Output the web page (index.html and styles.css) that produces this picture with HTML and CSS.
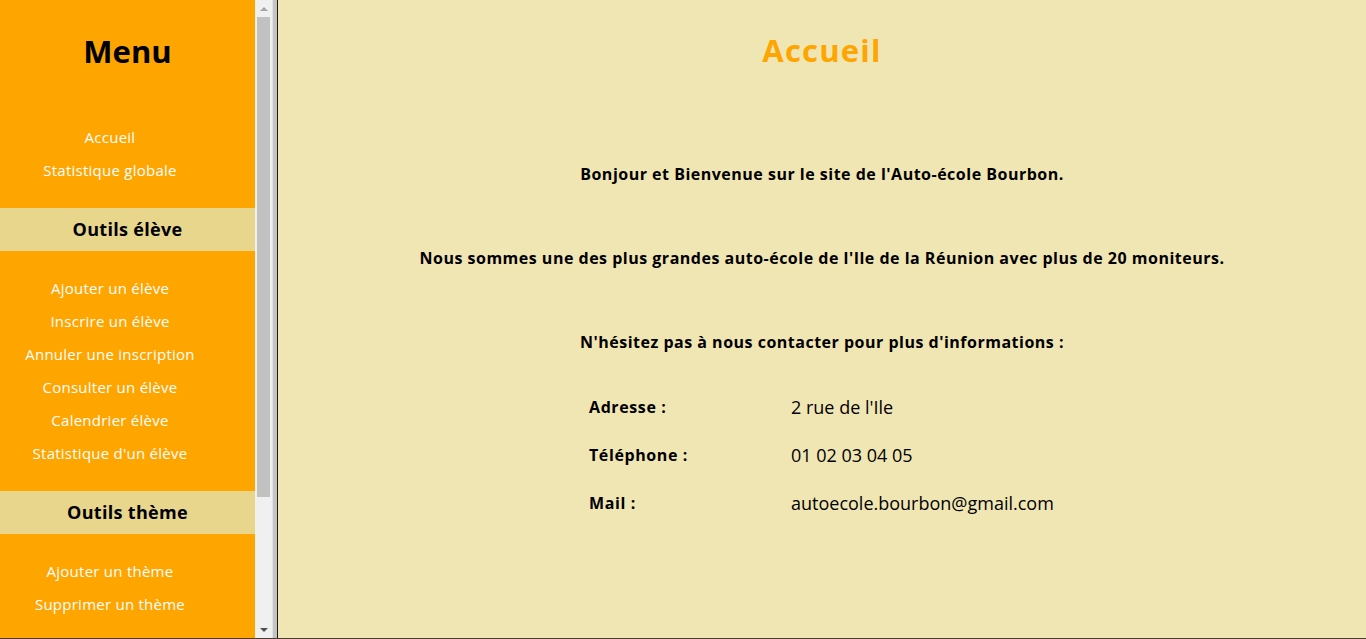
FILE: index.html
```html
<!DOCTYPE html>
<html lang="fr">
<head>
<meta charset="utf-8">
<title>Auto-école Bourbon</title>
<link rel="stylesheet" href="styles.css">
</head>
<body>
<div class="frame">
  <nav class="sidebar">
    <h1 class="menu-title">Menu</h1>
    <ul class="links first">
      <li><a href="#">Accueil</a></li>
      <li><a href="#">Statistique globale</a></li>
    </ul>
    <h2 class="section">Outils élève</h2>
    <ul class="links">
      <li><a href="#">Ajouter un élève</a></li>
      <li><a href="#">Inscrire un élève</a></li>
      <li><a href="#">Annuler une inscription</a></li>
      <li><a href="#">Consulter un élève</a></li>
      <li><a href="#">Calendrier élève</a></li>
      <li><a href="#">Statistique d'un élève</a></li>
    </ul>
    <h2 class="section">Outils thème</h2>
    <ul class="links">
      <li><a href="#">Ajouter un thème</a></li>
      <li><a href="#">Supprimer un thème</a></li>
    </ul>
  </nav>
  <div class="scrollbar">
    <div class="arrow up"></div>
    <div class="track"><div class="thumb"></div></div>
    <div class="arrow down"></div>
  </div>
  <div class="divider"></div>
  <main class="content">
    <h1 class="page-title">Accueil</h1>
    <p class="intro">Bonjour et Bienvenue sur le site de l'Auto-école Bourbon.</p>
    <p class="intro">Nous sommes une des plus grandes auto-école de l'Ile de la Réunion avec plus de 20 moniteurs.</p>
    <p class="intro">N'hésitez pas à nous contacter pour plus d'informations :</p>
    <table class="contact">
      <tr><th>Adresse :</th><td>2 rue de l'Ile</td></tr>
      <tr><th>Téléphone :</th><td>01 02 03 04 05</td></tr>
      <tr><th>Mail :</th><td>autoecole.bourbon@gmail.com</td></tr>
    </table>
  </main>
</div>
</body>
</html>
```

FILE: styles.css
```css
html, body {
  margin: 0;
  padding: 0;
  height: 100%;
  overflow: hidden;
}
body {
  font-family: "Open Sans", "DejaVu Sans", sans-serif;
  background: #f0e6b4;
}
.frame {
  display: flex;
  height: 638px;
  border-bottom: 1px solid #4a3c30;
}
.sidebar {
  width: 255px;
  flex: none;
  background: #ffa500;
  overflow: hidden;
}
.menu-title {
  margin: 0;
  padding-top: 31px;
  height: 84px;
  font-size: 31px;
  line-height: 40px;
  text-align: center;
  font-weight: bold;
  color: #000;
}
.links {
  list-style: none;
  margin: 0;
  padding: 0 35px 0 0;
  text-align: center;
}
.links.first {
  padding-top: 6px;
  padding-bottom: 21px;
}
.links li {
  height: 33px;
  line-height: 33px;
  font-size: 15px;
  letter-spacing: 0.25px;
}
.links a {
  color: #fff;
  text-decoration: none;
}
.section + .links {
  padding-top: 21px;
  padding-bottom: 21px;
}
.section {
  margin: 0;
  height: 43px;
  line-height: 43px;
  background: #e8d68c;
  text-align: center;
  font-size: 18px;
  letter-spacing: 0.3px;
  font-weight: bold;
  color: #000;
}
.scrollbar {
  width: 17px;
  flex: none;
  background: #f0f0f0;
  display: flex;
  flex-direction: column;
}
.arrow {
  height: 17px;
  flex: none;
  display: flex;
  align-items: center;
  justify-content: center;
}
.arrow::before {
  content: "";
  border-left: 4px solid transparent;
  border-right: 4px solid transparent;
}
.arrow.up::before {
  border-bottom: 4px solid #a3a3a3;
}
.arrow.down::before {
  border-top: 4px solid #505050;
}
.track {
  flex: 1;
  padding: 0 2px;
}
.thumb {
  height: 480px;
  background: #c1c1c1;
}
.divider {
  width: 6px;
  flex: none;
  box-sizing: border-box;
  border-left: 1px solid #e2e2e2;
  border-right: 1px solid #1a1a1a;
  background: #c4c4c4;
}
.content {
  flex: 1;
  text-align: center;
  color: #000;
}
.page-title {
  margin: 0;
  padding-top: 30px;
  height: 134px;
  line-height: 40px;
  font-size: 31px;
  letter-spacing: 1.2px;
  font-weight: bold;
  color: #ffa500;
}
.intro {
  margin: 0;
  height: 84px;
  line-height: 20px;
  font-size: 16px;
  letter-spacing: 0.5px;
  font-weight: bold;
}
.contact {
  margin: -33px auto 0;
  border-collapse: collapse;
  text-align: left;
  width: 478px;
}
.contact th {
  width: 190px;
  padding: 0 6px;
  height: 48px;
  font-size: 16px;
  letter-spacing: 0.6px;
  font-weight: bold;
  vertical-align: middle;
}
.contact td {
  padding: 0 6px;
  height: 48px;
  font-size: 18px;
  vertical-align: middle;
}
```
